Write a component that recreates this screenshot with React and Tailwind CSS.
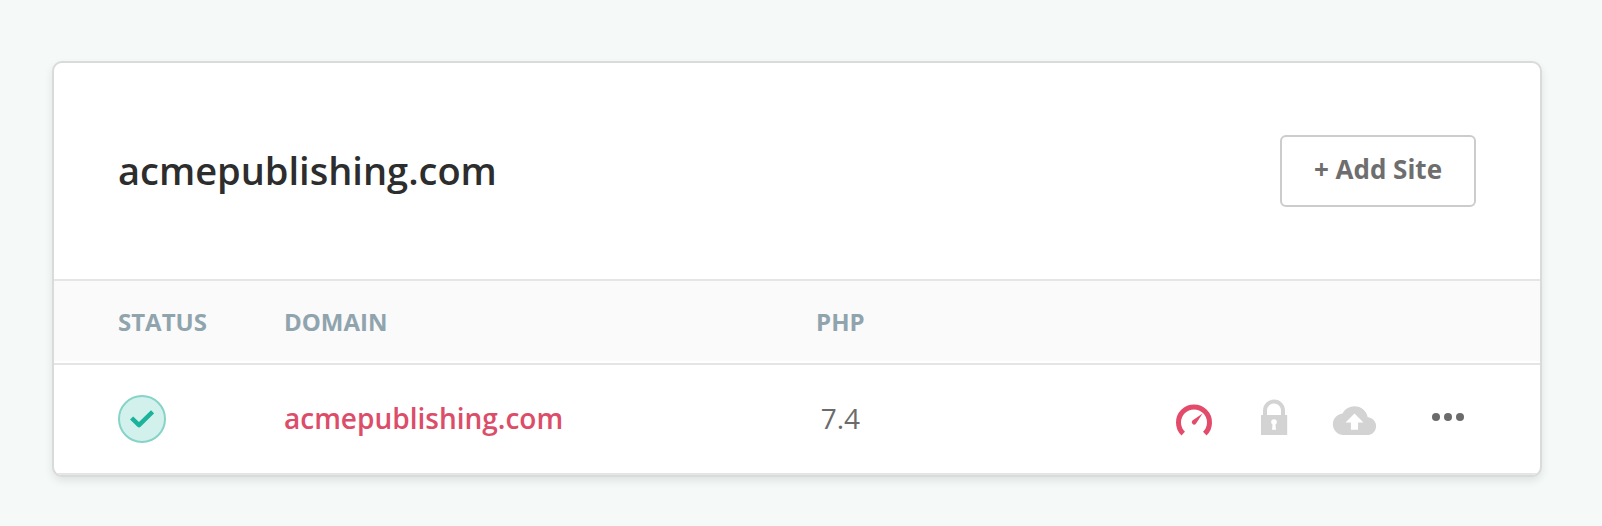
import React from "react";

const sites = [{ domain: "acmepublishing.com", php: "7.4" }];

function StatusBadge() {
  return (
    <span
      role="img"
      aria-label="Active"
      className="flex size-12 items-center justify-center rounded-full border-2 border-[#86d3c8] bg-[#d3f1ec]"
    >
      <svg viewBox="0 0 24 20" className="h-5 w-6" fill="none" stroke="#1bb39b" strokeWidth="4.5" strokeLinejoin="round">
        <path d="M1.6 9 L9 16.2 L22.6 2.8" />
      </svg>
    </span>
  );
}

function GaugeIcon() {
  return (
    <svg viewBox="0 0 44 40" className="h-10 w-11">
      <path d="M11.2 34.6 A15.5 15.5 0 1 1 32.8 34.6" fill="none" stroke="#e34b6a" strokeWidth="5" />
      <path d="M30.6 14.6 L23.9 24.7 A2.3 2.3 0 1 1 20.4 21.6 Z" fill="#e34b6a" />
    </svg>
  );
}

function LockIcon() {
  return (
    <svg viewBox="0 0 44 40" className="h-10 w-11">
      <path d="M13 17 V11.5 A9 9 0 0 1 31 11.5 V17" fill="none" stroke="#d3d3d3" strokeWidth="4" />
      <path d="M9 16 H35.2 V36 H9 Z" fill="#d3d3d3" />
      <circle cx="22" cy="23" r="2.8" fill="#fff" />
      <path d="M20.8 23 H23.2 L24 30.8 H20 Z" fill="#fff" />
    </svg>
  );
}

function CloudUploadIcon() {
  return (
    <svg viewBox="0 0 44 40" className="h-10 w-11" fill="#d3d3d3">
      <path
        transform="translate(0.9 0.1) scale(1.8)"
        d="M19.35 10.04C18.67 6.59 15.64 4 12 4 9.11 4 6.6 5.64 5.35 8.04 2.34 8.36 0 10.91 0 14c0 3.31 2.69 6 6 6h13c2.76 0 5-2.24 5-5 0-2.64-2.05-4.78-4.65-4.96zM14 13v4h-4v-4H7l5-5 5 5h-3z"
      />
    </svg>
  );
}

function MoreIcon() {
  return (
    <svg viewBox="0 0 32 40" className="h-10 w-8" fill="#6b6b6b">
      <circle cx="4" cy="18" r="4" />
      <circle cx="16" cy="18" r="4" />
      <circle cx="28" cy="18" r="4" />
    </svg>
  );
}

function SiteRow({ site }) {
  const cell = "h-[110px] border-b-2 border-[#e5e5e5]";
  return (
    <tr>
      <td className={`${cell} p-0 pl-16`}>
        <StatusBadge />
      </td>
      <td className={`${cell} p-0 pb-0.5`}>
        <a href="#site" className="text-[28px] font-semibold text-[#db4d69]">{site.domain}</a>
      </td>
      <td className={`${cell} p-0 pb-0.5 text-center text-[28px] text-[#6b6b6b]`}>{site.php}</td>
      <td className={`${cell} p-0 pr-19`}>
        <div className="flex items-center justify-end gap-9">
          <button type="button" aria-label="Performance"><GaugeIcon /></button>
          <button type="button" aria-label="SSL"><LockIcon /></button>
          <button type="button" aria-label="Backups"><CloudUploadIcon /></button>
          <button type="button" aria-label="More actions" className="ml-5"><MoreIcon /></button>
        </div>
      </td>
    </tr>
  );
}

export default function App() {
  const head = "h-[84px] border-b-2 border-[#e5e5e5] bg-[#fafafa] p-0 shadow-[inset_0_-2px_0_#ffffff]";
  return (
    <main className="min-h-screen bg-[#f5f9f8] pt-[61px] pr-15 pb-12 pl-13 font-['Open_Sans',sans-serif]">
      <section className="overflow-hidden rounded-[10px] border-2 border-[#d9dada] bg-white shadow-[0_4px_8px_rgba(0,0,0,0.09)]">
        <header className="flex h-[218px] items-center justify-between border-b-2 border-[#e5e5e5] px-16">
          <h1 className="pb-0.5 text-[38px] font-semibold text-[#2d2d2d]">{sites[0].domain}</h1>
          <button
            type="button"
            className="h-18 rounded-md border-2 border-[#cccccc] bg-white px-8 pb-1 text-[26px] font-bold text-[#6e6e6e]"
          >
            + Add Site
          </button>
        </header>
        <table className="w-full table-fixed border-separate border-spacing-0 text-left">
          <thead className="text-2xl font-bold text-[#90a4ae]">
            <tr>
              <th scope="col" className={`${head} w-[230px] pl-16`}>STATUS</th>
              <th scope="col" className={head}>DOMAIN</th>
              <th scope="col" className={`${head} w-[50px] text-center`}>PHP</th>
              <th scope="col" aria-label="Actions" className={`${head} w-[45.4%]`} />
            </tr>
          </thead>
          <tbody>
            {sites.map((site) => (
              <SiteRow key={site.domain} site={site} />
            ))}
          </tbody>
        </table>
      </section>
    </main>
  );
}
